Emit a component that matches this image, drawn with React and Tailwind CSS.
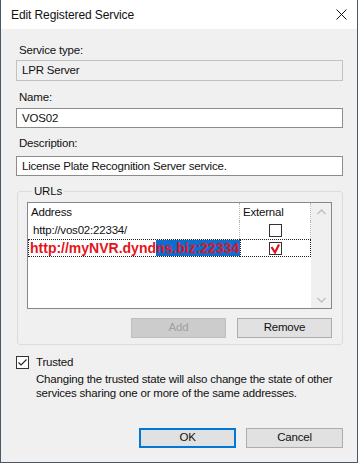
import React from "react";

const BoxCheck = ({ checked, red }) => (
    <div className="w-[13px] h-[13px] border border-[#333333] bg-white flex items-center justify-center">
        {checked && (
            <svg width="11" height="11" viewBox="0 0 11 11">
                {red ? (
                    <path d="M1.5 4 L5 9.5 L9 1.5" fill="none" stroke="#e0141e" strokeWidth="2.2" />
                ) : (
                    <path d="M1.5 5.5 L4 8 L9.5 2.5" fill="none" stroke="#222222" strokeWidth="1.1" />
                )}
            </svg>
        )}
    </div>
);

const Chevron = ({ up }) => (
    <svg width="9" height="6" viewBox="0 0 9 6">
        <path d={up ? "M0.5 5 L4.5 1 L8.5 5" : "M0.5 1 L4.5 5 L8.5 1"} fill="none" stroke="#c0c0c0" strokeWidth="1.5" />
    </svg>
);

export default function App() {
    return (
        <div className="w-[359px] h-[464px] bg-white font-['Liberation_Sans',sans-serif] text-[11.5px] tracking-[-0.2px] text-[#111111]">
            <div className="w-[358px] h-[463px] border-x border-b border-[#4d5866] flex flex-col">
                {/* Title bar */}
                <div className="h-[29px] bg-white flex items-center justify-between pl-[10px] pr-[10px]">
                    <span className="text-[12px] tracking-[-0.1px]">Edit Registered Service</span>
                    <svg width="11" height="11" viewBox="0 0 11 11">
                        <path d="M0.5 0.5 L10.5 10.5 M10.5 0.5 L0.5 10.5" stroke="#111111" strokeWidth="1" />
                    </svg>
                </div>

                {/* Body */}
                <div className="flex-1 bg-[#f0f0f0] flex flex-col pl-[15px] pr-[14px] pt-[13px] pb-[14px]">
                    <div className="h-[16px] leading-[16px] pl-[3px]">Service type:</div>
                    <div className="mt-[2px] h-[21px] border border-[#c2c2c2] bg-[#f0f0f0] pl-[5px] leading-[19px]">LPR Server</div>

                    <div className="mt-[8px] h-[16px] leading-[16px] pl-[3px]">Name:</div>
                    <div className="mt-[3px] h-[20px] border border-[#8c8c8c] bg-white pl-[5px] leading-[18px]">VOS02</div>

                    <div className="mt-[7px] h-[16px] leading-[16px] pl-[3px]">Description:</div>
                    <div className="mt-[5px] h-[20px] border border-[#8c8c8c] bg-white pl-[5px] leading-[18px]">
                        License Plate Recognition Server service.
                    </div>

                    {/* URLs group */}
                    <fieldset className="mt-[6px] mx-[1px] border border-[#dcdcdc] rounded-[3px] pl-[9px] pr-[10px] pb-[6px]">
                        <legend className="ml-[5px] px-[2px] leading-[18px]">URLs</legend>

                        <div className="mt-[2px] h-[107px] border border-[#828790] bg-white flex">
                            <div className="flex-1 flex flex-col">
                                <div className="grid grid-cols-[212px_71px]">
                                    <div className="h-[18px] leading-[18px] pl-[3px] border-r border-dotted border-[#b8b8b8]">Address</div>
                                    <div className="h-[18px] leading-[18px] pl-[3px] border-r border-dotted border-[#b8b8b8]">External</div>

                                    <div className="h-[18px] leading-[18px] pl-[5px] border-r border-dotted border-[#b8b8b8]">http://vos02:22334/</div>
                                    <div className="h-[18px] flex items-center justify-center border-r border-dotted border-[#b8b8b8]">
                                        <BoxCheck />
                                    </div>

                                    <div className="h-[18px] flex border-l border-y border-dotted border-[#222222] font-bold text-[14px] tracking-normal text-[#e4141c] leading-[16px]">
                                        <span className="pl-[1px] whitespace-nowrap">http://myNVR.dynd</span>
                                        <span className="flex-1 bg-[#0a6fd0] whitespace-nowrap">ns.biz:22334</span>
                                    </div>
                                    <div className="h-[18px] flex items-center justify-center border border-dotted border-[#222222]">
                                        <BoxCheck checked red />
                                    </div>
                                </div>
                            </div>
                            <div className="w-[20px] bg-[#f0f0f0] flex flex-col items-center justify-between pt-[6px] pb-[5px]">
                                <Chevron up />
                                <Chevron />
                            </div>
                        </div>

                        <div className="mt-[9px] flex justify-end gap-[11px]">
                            <div className="w-[95px] h-[20px] border border-[#bfbfbf] bg-[#cccccc] text-[#a0a0a0] flex items-center justify-center">Add</div>
                            <div className="w-[95px] h-[20px] border border-[#adadad] bg-[#e1e1e1] flex items-center justify-center">Remove</div>
                        </div>
                    </fieldset>

                    {/* Trusted */}
                    <div className="mt-[10px] flex items-center gap-[7px] h-[14px]">
                        <BoxCheck checked />
                        <span className="leading-[14px]">Trusted</span>
                    </div>
                    <div className="mt-[3px] pl-[20px] leading-[14px] whitespace-nowrap">
                        Changing the trusted state will also change the state of other
                        <br />
                        services sharing one or more of the same addresses.
                    </div>

                    <div className="mt-auto flex justify-end gap-[10px]">
                        <div className="w-[97px] h-[20px] border-2 border-[#0078d7] bg-[#e1e1e1] flex items-center justify-center">OK</div>
                        <div className="w-[97px] h-[20px] border border-[#adadad] bg-[#e1e1e1] flex items-center justify-center">Cancel</div>
                    </div>
                </div>
            </div>
        </div>
    );
}
